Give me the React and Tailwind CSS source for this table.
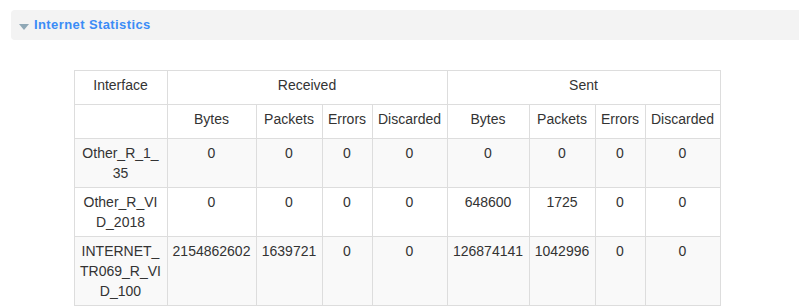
const rows = [
  { name: 'Other_R_1_35', rx: ['0', '0', '0', '0'], tx: ['0', '0', '0', '0'] },
  { name: 'Other_R_VID_2018', rx: ['0', '0', '0', '0'], tx: ['648600', '1725', '0', '0'] },
  {
    name: 'INTERNET_TR069_R_VID_100',
    rx: ['2154862602', '1639721', '0', '0'],
    tx: ['126874141', '1042996', '0', '0'],
  },
];

const colWidths = [93, 89, 66, 50, 75, 82, 66, 50, 75];
const subHeads = ['Bytes', 'Packets', 'Errors', 'Discarded'];

const th = 'border border-[#dddddd] px-[5px] pt-[4px] pb-[9px] text-center font-normal align-top';
const td = 'border border-[#dddddd] px-[5px] py-[4px] text-center align-top break-all';

function StatsTable() {
  return (
    <table className="w-[647px] table-fixed border-collapse text-[14px] leading-5 text-[#333333]">
      <colgroup>
        {colWidths.map((w, i) => (
          <col key={i} style={{ width: w }} />
        ))}
      </colgroup>
      <thead>
        <tr className="bg-white">
          <th className={th}>Interface</th>
          <th className={th} colSpan={4}>Received</th>
          <th className={th} colSpan={4}>Sent</th>
        </tr>
        <tr className="bg-white">
          <th className={th}></th>
          {[...subHeads, ...subHeads].map((h, i) => (
            <th key={i} className={th}>{h}</th>
          ))}
        </tr>
      </thead>
      <tbody>
        {rows.map((r, i) => (
          <tr key={r.name} className={i % 2 === 0 ? 'bg-[#f9f9f9]' : 'bg-white'}>
            <td className={td}>{r.name}</td>
            {[...r.rx, ...r.tx].map((v, j) => (
              <td key={j} className={td}>{v}</td>
            ))}
          </tr>
        ))}
      </tbody>
    </table>
  );
}

export default function App() {
  return (
    <div className="min-h-[307px] bg-white pt-[10px] font-['Liberation_Sans',Arial,sans-serif]">
      {/* collapsible section header */}
      <div className="ml-[11px] flex h-[30px] items-center gap-[5px] rounded-l-[4px] bg-[#f3f3f3] pl-[8px]">
        <span className="mt-[4px] h-0 w-0 border-x-[5px] border-t-[6px] border-x-transparent border-t-[#8fa8b6]" />
        <span className="text-[13px] font-bold tracking-[0.4px] text-[#3b8cf6]">Internet Statistics</span>
      </div>
      <div className="ml-[11px] mr-[16px] mt-[30px] flex justify-center">
        <StatsTable />
      </div>
    </div>
  );
}
